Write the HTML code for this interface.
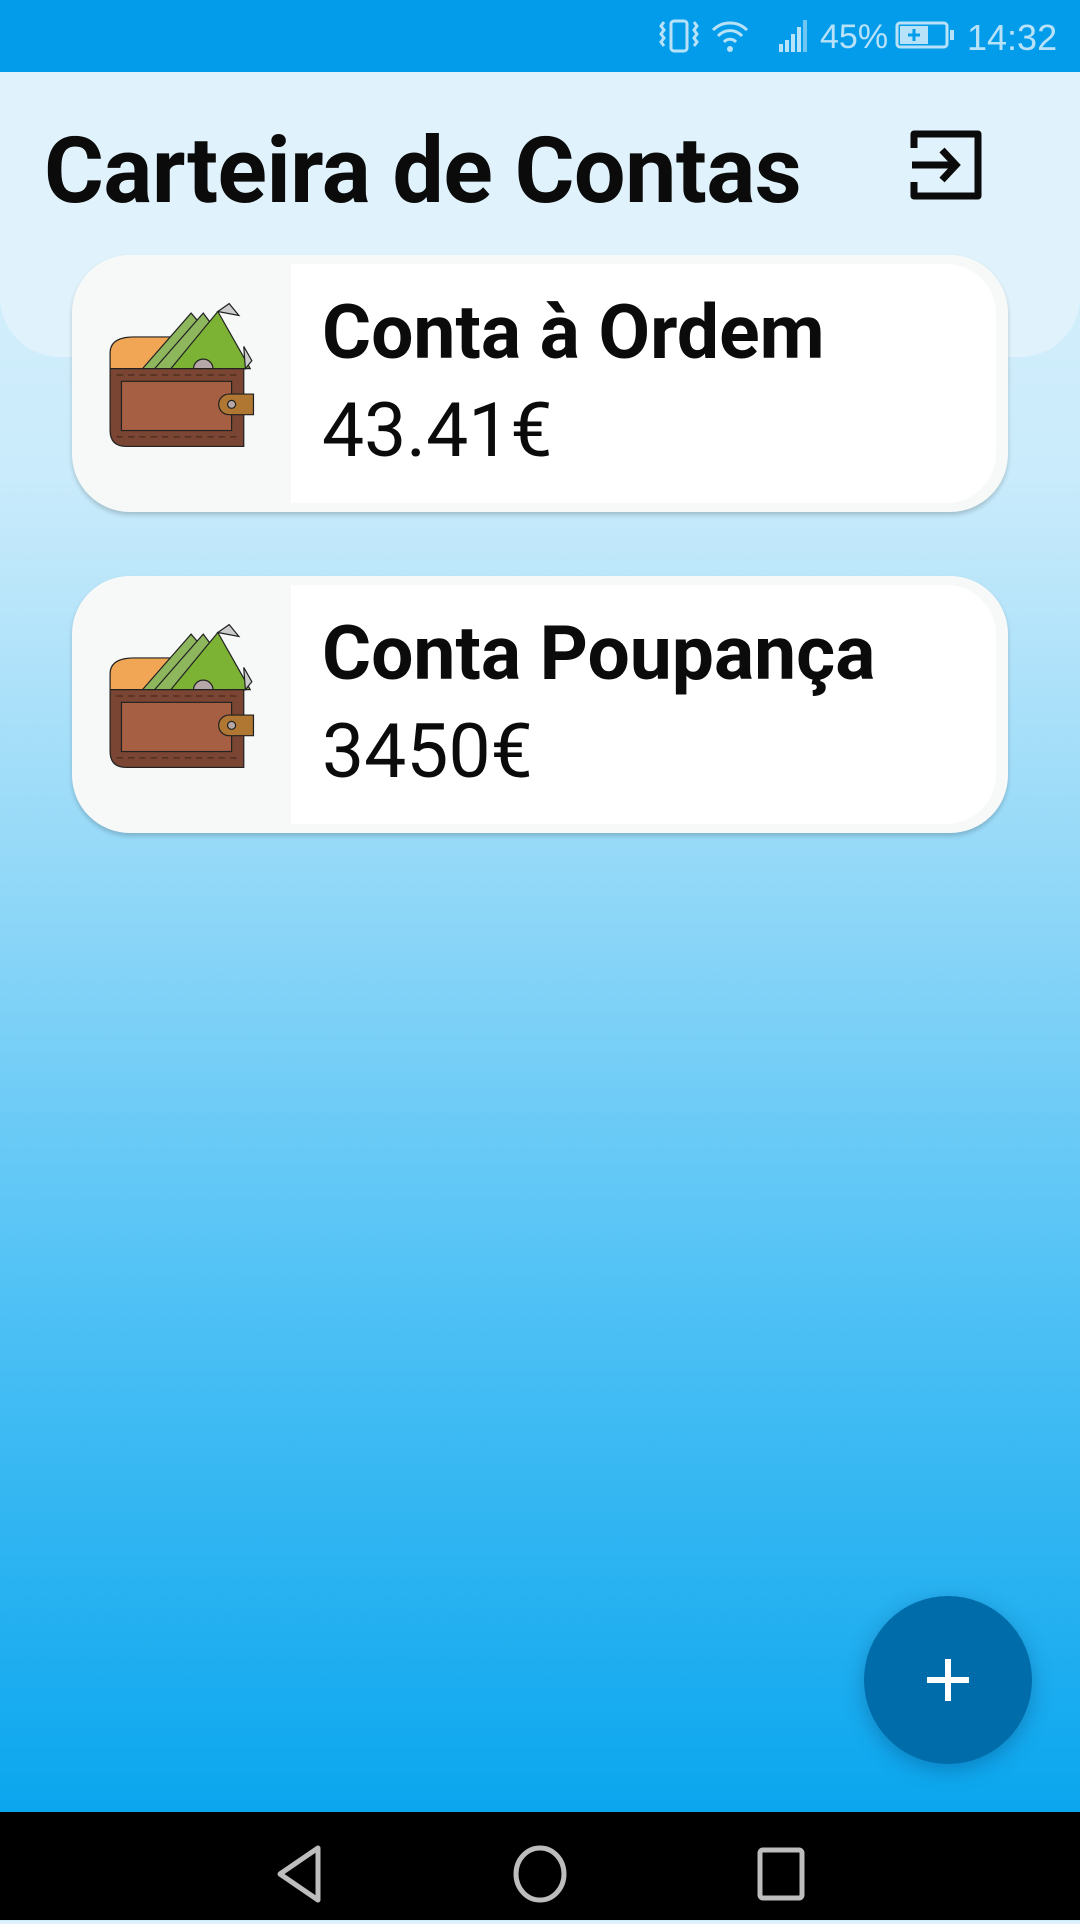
<!DOCTYPE html>
<html><head><meta charset="utf-8"><style>
*{margin:0;padding:0;box-sizing:border-box}
body{width:1080px;height:1920px;position:relative;overflow:hidden;font-family:"Roboto","Liberation Sans",sans-serif;background:linear-gradient(to bottom,#dff2fb 0px,#c9ebfb 480px,#8fd7f8 900px,#4fc1f5 1300px,#0aa6ee 1812px)}
.sb{position:absolute;left:0;top:0;width:1080px;height:72px;background:#039cea}
.hdr{position:absolute;left:0;top:72px;width:1080px;height:285px;background:#e0f2fb;border-radius:0 0 60px 60px}
.title{position:absolute;left:44px;top:117px;font-size:91.5px;font-weight:bold;color:#0b0b0b;letter-spacing:-0.5px;line-height:110px}
.card{position:absolute;left:72px;width:936px;height:257px;background:#f7f9f9;border-radius:58px;box-shadow:0 3px 5px rgba(0,0,0,.18)}
.inner{position:absolute;left:219px;top:9px;width:705px;height:239px;background:#fff;border-radius:0 50px 50px 0}
.name{position:absolute;left:250px;top:34px;font-size:75px;font-weight:bold;color:#0b0b0b;white-space:nowrap}
.amt{position:absolute;left:250px;top:132px;font-size:75px;color:#0b0b0b;white-space:nowrap}
.wallet{position:absolute;left:30px;top:47px}
.fab{position:absolute;left:864px;top:1596px;width:168px;height:168px;border-radius:50%;background:#006daa;box-shadow:0 6px 20px rgba(0,60,110,.35)}
.nav{position:absolute;left:0;top:1812px;width:1080px;height:108px;background:#000}
</style></head><body>
<div class="sb">
<svg width="1080" height="72" style="position:absolute;left:0;top:0">
<g fill="none" stroke="#b8e2f8" stroke-width="3">
<rect x="671" y="21" width="16" height="30" rx="3"/>
<path d="M664 22 l-3 4 l3 4 l-3 4 l3 4 l-3 4 l3 4 M694 22 l3 4 l-3 4 l3 4 l-3 4 l3 4 l-3 4"/>
<path d="M713 30 a24 24 0 0 1 34 0 M718 36 a16 16 0 0 1 24 0 M724 42 a8 8 0 0 1 12 0"/>
<rect x="897" y="23" width="50" height="24" rx="3"/>
</g>
<circle cx="730" cy="49" r="3" fill="#b8e2f8"/>
<g fill="#b8e2f8"><rect x="779" y="44" width="4" height="8"/><rect x="785" y="40" width="4" height="12"/><rect x="791" y="34" width="4" height="18"/><rect x="797" y="27" width="4" height="25"/><rect x="803" y="20" width="4" height="32" opacity=".6"/>
<rect x="950" y="30" width="4" height="10"/><rect x="900" y="26" width="28" height="18"/></g>
<path d="M914 29v12M908 35h12" stroke="#039cea" stroke-width="3"/>
<text x="820" y="48" font-family="Liberation Sans,sans-serif" font-size="34" fill="#b8e2f8">45%</text>
<text x="967" y="50" font-family="Liberation Sans,sans-serif" font-size="36" fill="#b8e2f8">14:32</text>
</svg></div>
<div class="hdr"></div>
<div class="title">Carteira de Contas</div>
<svg style="position:absolute;left:910px;top:128px" width="76" height="74" viewBox="0 0 76 74"><path d="M4 20V6h64v62H4V54" fill="none" stroke="#0b0b0b" stroke-width="7" stroke-linejoin="round"/><path d="M2 37h44M32 22l14 15-14 15" fill="none" stroke="#0b0b0b" stroke-width="7"/></svg>

<div class="card" style="top:255px"><div class="inner"></div>
<svg class="wallet" width="162" height="146" viewBox="0 -4 200 184" preserveAspectRatio="none"><g stroke="#222" stroke-width="1.5">
<path d="M10 60 q0-20 30-20 h80 v40 h-110z" fill="#f0a654"/>
<path d="M50 80 l60-70 l50 60 l-10 10z" fill="#8db65d"/>
<path d="M65 80 l60-70 l40 55 l-15 15z" fill="#8db65d"/>
<path d="M85 80 l58-72 l40 72z" fill="#7db334"/>
<path d="M143 8 l14-10 l12 15z M175 52 l10 18 l-8 10 z" fill="#ccc"/>
<path d="M113 80 a12 12 0 0 1 24 0z" fill="#b6a8a8"/>
<path d="M10 80 h165 v98 h-145 q-20 0 -20 -20z" fill="#7a4532"/>
<rect x="24" y="96" width="136" height="62" fill="#a65f43"/>
<path d="M18 88 h150 M18 166 h150" stroke="#4a2a20" stroke-dasharray="8 6"/>
<path d="M157 112 h30 v26 h-30 a13 13 0 0 1 0-26z" fill="#b07733"/>
<circle cx="160" cy="125" r="5" fill="#b6a8a8"/></g></svg>
<div class="name">Conta à Ordem</div><div class="amt">43.41€</div></div>

<div class="card" style="top:576px"><div class="inner"></div>
<svg class="wallet" width="162" height="146" viewBox="0 -4 200 184" preserveAspectRatio="none"><g stroke="#222" stroke-width="1.5">
<path d="M10 60 q0-20 30-20 h80 v40 h-110z" fill="#f0a654"/>
<path d="M50 80 l60-70 l50 60 l-10 10z" fill="#8db65d"/>
<path d="M65 80 l60-70 l40 55 l-15 15z" fill="#8db65d"/>
<path d="M85 80 l58-72 l40 72z" fill="#7db334"/>
<path d="M143 8 l14-10 l12 15z M175 52 l10 18 l-8 10 z" fill="#ccc"/>
<path d="M113 80 a12 12 0 0 1 24 0z" fill="#b6a8a8"/>
<path d="M10 80 h165 v98 h-145 q-20 0 -20 -20z" fill="#7a4532"/>
<rect x="24" y="96" width="136" height="62" fill="#a65f43"/>
<path d="M18 88 h150 M18 166 h150" stroke="#4a2a20" stroke-dasharray="8 6"/>
<path d="M157 112 h30 v26 h-30 a13 13 0 0 1 0-26z" fill="#b07733"/>
<circle cx="160" cy="125" r="5" fill="#b6a8a8"/></g></svg>
<div class="name">Conta Poupança</div><div class="amt">3450€</div></div>

<div class="fab"><svg width="168" height="168"><path d="M84 63v42M63 84h42" stroke="#fff" stroke-width="6"/></svg></div>
<div class="nav"><svg width="1080" height="108">
<g fill="none" stroke="#bdbdbd" stroke-width="5" stroke-linejoin="round">
<path d="M318 36 L280 62 L318 88 Z"/>
<ellipse cx="540" cy="62" rx="24" ry="26"/>
<rect x="760" y="38" width="42" height="48" rx="3"/></g></svg></div>
</body></html>
